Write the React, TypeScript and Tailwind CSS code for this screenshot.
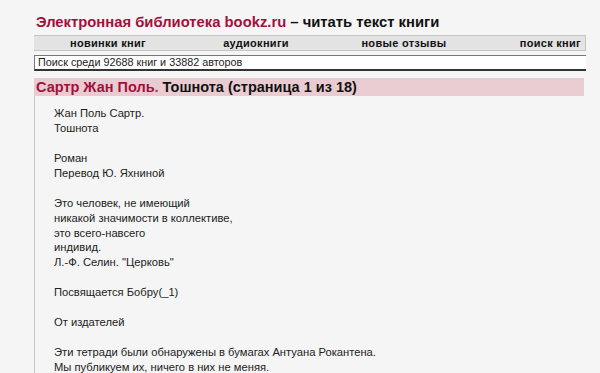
import React from "react";

const lines: string[] = [
  "Жан Поль Сартр.",
  "Тошнота",
  "",
  "Роман",
  "Перевод Ю. Яхниной",
  "",
  "Это человек, не имеющий",
  "никакой значимости в коллективе,",
  "это всего-навсего",
  "индивид.",
  'Л.-Ф. Селин. "Церковь"',
  "",
  "Посвящается Бобру(_1)",
  "",
  "От издателей",
  "",
  "Эти тетради были обнаружены в бумагах Антуана Рокантена.",
  "Мы публикуем их, ничего в них не меняя.",
];

export default function App() {
  return (
    <div
      className="h-[373px] overflow-hidden bg-[#f4f5f4] text-[#1a1a1a] pl-[34px] pr-[14px]"
      style={{ fontFamily: '"Liberation Sans", Arial, sans-serif' }}
    >
      <div className="pt-[13px] h-[35px] pl-[2px] text-[14.8px] font-bold leading-[18px] whitespace-nowrap">
        <span className="text-[#a3103c]">Электронная библиотека bookz.ru</span>
        <span className="text-[#111]"> – читать текст книги</span>
      </div>
      <div className="grid grid-cols-[148px_148px_148px_1fr] h-[16px] bg-[#e2e3e2] border-t border-b border-r border-[#c4c4c4] text-[11px] font-bold leading-[14px] text-[#111] tracking-[0.3px]">
        <div className="text-center">новинки книг</div>
        <div className="text-center">аудиокниги</div>
        <div className="text-center">новые отзывы</div>
        <div className="text-right pr-[4px]">поиск книг</div>
      </div>
      <div className="mt-[4px] h-[16px] bg-white border-l border-t border-[#777] border-b-2 border-b-[#333] pl-[3px] text-[10.8px] leading-[13px] text-[#222] whitespace-nowrap">
        Поиск среди 92688 книг и 33882 авторов
      </div>
      <div className="mt-[7px] h-[18px] bg-[#e8ccd1] pl-[2px] mr-[2px] text-[14.5px] font-bold leading-[18px] whitespace-nowrap">
        <span className="text-[#a3103c]">Сартр Жан Поль</span>
        <span className="text-[#8a4a5a]">.</span>
        <span className="text-[#111]"> Тошнота (страница 1 из 18)</span>
      </div>
      <div className="border-l border-[#c8c8c8] pl-[19px] pt-[10px] text-[11.2px] leading-[14.95px] text-[#222]">
        {lines.map((l, i) => (
          <div key={i} className="h-[14.95px] whitespace-nowrap">
            {l}
          </div>
        ))}
      </div>
    </div>
  );
}
